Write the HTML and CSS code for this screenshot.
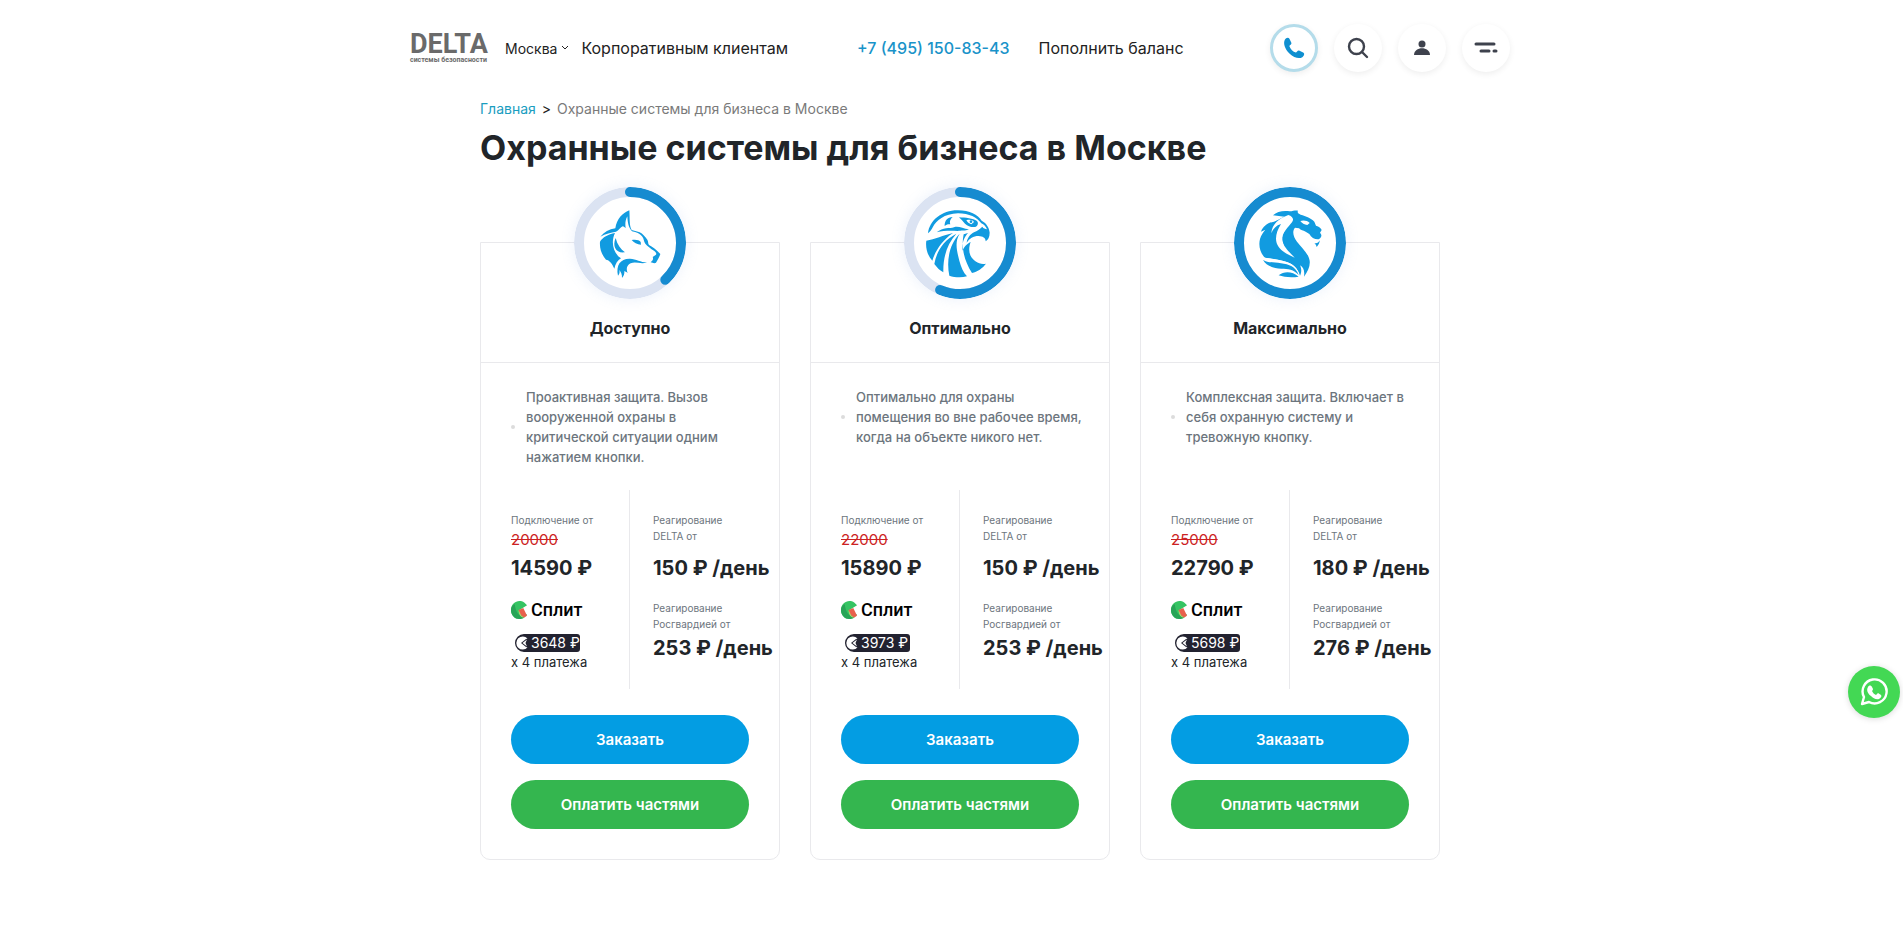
FILE: index.html
```html
<!DOCTYPE html>
<html lang="ru">
<head>
    <meta charset="UTF-8">
    <meta name="viewport" content="width=device-width, initial-scale=1.0">
    <title>Охранные системы для бизнеса в Москве</title>
    <link rel="stylesheet" href="styles.css">
</head>
<body>
    <!-- Shared icons -->
    <svg class="sprite" aria-hidden="true">
        <symbol id="split" viewBox="0 0 18 20">
            <path d="M14 2C8-2 0 2 0 10s8 12 14 8l3-3-8-5 8-5z" fill="#35c463"/>
            <path d="M0 10c0 8 8 12 14 8-5-1-9-5-10-14C1 5 0 8 0 10z" fill="#28a457"/>
            <path d="M8 10l5-2 4 8-3 2c-3-1-5-4-6-8z" fill="#e8604c"/>
            <path d="M8 10l3 6 3 2c-4 0-6-4-6-8z" fill="#b5d46a"/>
        </symbol>
        <symbol id="pac" viewBox="0 0 16 16">
            <path d="M12.500 3.500A6.500 6.500 0 1 0 12.500 12.500L11 12 6 8l5-4z" fill="#fff"/>
            <path d="M12 4.500L7.500 8l4.500 3.500-1.500-3.500z" fill="#fff"/>
        </symbol>
        <symbol id="handset" viewBox="0 0 24 24">
            <path d="M2 3c1-2 4-3 5-1l2 4c1 2-2 3-2 4 1 3 4 6 7 7 1 0 2-3 4-2l4 2c2 1 1 4-1 5-3 2-9 1-14-4S0 7 2 3z" fill="currentColor"/>
        </symbol>
    </svg>

    <header class="header">
        <a class="logo" href="#">
            <span class="logo-name">DELTA</span>
            <span class="logo-sub">системы безопасности</span>
        </a>
        <button class="city" type="button">Москва
            <svg width="8" height="6" viewBox="0 0 8 6"><path d="M1 1l3 3 3-3" fill="none" stroke="currentColor"/></svg>
        </button>
        <a class="nav-link" href="#">Корпоративным клиентам</a>
        <a class="phone" href="tel:+74951508343">+7 (495) 150-83-43</a>
        <a class="nav-link" href="#">Пополнить баланс</a>
        <div class="tools">
            <button class="tool tool-call" type="button" aria-label="Позвонить">
                <svg width="22" height="22"><use href="#handset"/></svg>
            </button>
            <button class="tool" type="button" aria-label="Поиск">
                <svg width="22" height="22" viewBox="0 0 22 22" fill="none" stroke="currentColor" stroke-width="2.400" stroke-linecap="round"><circle cx="9.500" cy="9.500" r="7.500"/><path d="M15 15l5 5"/></svg>
            </button>
            <button class="tool" type="button" aria-label="Личный кабинет">
                <svg width="16" height="16" viewBox="0 0 16 16" fill="currentColor"><circle cx="8" cy="4" r="3.500"/><path d="M0 15c0-9 16-9 16 0z"/></svg>
            </button>
            <button class="tool" type="button" aria-label="Меню">
                <svg width="24" height="12" viewBox="0 0 24 12" fill="none" stroke="currentColor" stroke-width="3" stroke-linecap="round"><path d="M2 2h18M7 9h8M20 9h2"/></svg>
            </button>
        </div>
    </header>

    <main class="content">
        <nav class="breadcrumbs">
            <a href="#">Главная</a> <span class="sep">&gt;</span> <span>Охранные системы для бизнеса в Москве</span>
        </nav>
        <h1>Охранные системы для бизнеса в Москве</h1>

        <div class="cards">
            <section class="card">
                <svg class="ring" viewBox="43 20 336 336">
                    <circle class="ring-track" cx="211" cy="188" r="153"/>
                    <path class="ring-value" pathLength="100" stroke-dasharray="37.8 100" d="M211 35a153 153 0 1 1 0 306a153 153 0 1 1 0-306"/>
                    <g class="animal">
                        <path d="M209 90C188 98 171 116 167 144C148 147 134 155 122 169C138 160 154 156 169 154C177 151 183 140 189 138C193 138 195 141 198 144C196 130 197 119 203 108C204 128 207 142 217 153C230 156 241 160 247 168C253 175 252 184 257 190C262 197 273 204 284 212C289 216 291 219 289 223L279 230C282 236 279 241 273 246C280 249 287 249 289 247C294 238 300 229 302 221C291 209 280 200 268 194C264 188 267 184 263 178C257 170 249 160 240 156L216 149C208 135 211 112 209 90Z"/>
                        <path d="M166 158C145 162 129 171 121 184C119 207 128 226 139 238C149 239 158 250 164 265C167 250 174 240 184 234C160 219 153 184 166 158Z"/>
                        <path d="M168 173C157 198 169 220 196 216C183 207 173 193 168 173Z"/>
                        <path d="M216 179C226 177 239 178 243 185L244 193C233 192 222 187 216 179Z"/>
                        <path d="M175 286C168 254 183 234 211 235C230 236 242 246 262 246C244 253 228 242 213 249C201 255 199 266 204 278C200 275 197 274 194 272C195 281 192 287 187 293C188 282 183 274 179 269C181 277 179 281 175 286Z"/>
                    </g>
                </svg>
                <h2>Доступно</h2>
                <ul class="about">
                    <li>Проактивная защита. Вызов вооруженной охраны в критической ситуации одним нажатием кнопки.</li>
                </ul>
                <div class="stats">
                    <div class="stat-left">
                        <div class="label">Подключение от</div>
                        <del>20000</del>
                        <div class="price">14590 ₽</div>
                        <div class="split"><svg width="17" height="20"><use href="#split"/></svg>Сплит</div>
                        <div class="badge"><svg width="16" height="16"><use href="#pac"/></svg>3648 ₽</div>
                        <div class="payments">x 4 платежа</div>
                    </div>
                    <div class="stat-right">
                        <div class="label">Реагирование<br>DELTA от</div>
                        <div class="price price-gap">150 ₽ /день</div>
                        <div class="label">Реагирование<br>Росгвардией от</div>
                        <div class="price">253 ₽ /день</div>
                    </div>
                </div>
                <div class="actions">
                    <button class="btn" type="button">Заказать</button>
                    <button class="btn btn-green" type="button">Оплатить частями</button>
                </div>
            </section>

            <section class="card">
                <svg class="ring" viewBox="43 20 336 336">
                    <circle class="ring-track" cx="211" cy="188" r="153"/>
                    <path class="ring-value" pathLength="100" stroke-dasharray="56.3 100" d="M211 35a153 153 0 1 1 0 306a153 153 0 1 1 0-306"/>
                    <g class="animal">
                        <path d="M115 159C119 120 158 89 205 90C240 90 265 103 276 121C289 127 299 142 300 157C300 170 295 179 288 183C288 172 279 168 267 167C250 167 240 174 231 187C233 172 242 162 253 156C263 152 270 146 278 139C281 145 287 145 292 147C288 138 283 133 275 129C262 112 239 99 205 99C164 100 139 122 130 139C126 147 121 154 115 159Z"/>
                        <path d="M208 111C227 112 250 114 262 122C267 128 265 135 259 139C249 142 236 139 226 130C220 124 214 116 208 111Z"/>
                        <path class="cut" d="M230 120C240 117 249 119 253 125L245 132C238 130 233 126 230 120Z"/>
                        <circle cx="244" cy="124" r="4"/>
                        <path d="M165 138C164 120 174 111 189 110C181 117 179 126 182 132C176 131 170 132 165 138Z"/>
                        <path d="M141 156C160 141 180 145 193 141C206 136 219 145 238 147C227 153 214 150 204 152C181 151 161 151 141 156Z"/>
                        <path d="M110 181C136 177 160 165 190 158C158 179 137 211 128 241C113 225 107 203 110 181Z"/>
                        <path d="M200 160C173 190 160 229 161 276C151 271 142 262 134 251C141 213 160 181 200 160Z"/>
                        <path d="M210 160C194 184 202 214 209 241C214 260 221 276 232 288C214 293 194 291 179 286C170 244 178 191 210 160Z"/>
                        <path d="M222 162C215 195 220 236 247 278C263 275 279 263 289 250C272 255 251 244 242 225C237 213 238 198 243 185C231 190 222 202 219 211C217 190 220 176 235 158Z"/>
                    </g>
                </svg>
                <h2>Оптимально</h2>
                <ul class="about">
                    <li>Оптимально для охраны помещения во вне рабочее время, когда на объекте никого нет.</li>
                </ul>
                <div class="stats">
                    <div class="stat-left">
                        <div class="label">Подключение от</div>
                        <del>22000</del>
                        <div class="price">15890 ₽</div>
                        <div class="split"><svg width="17" height="20"><use href="#split"/></svg>Сплит</div>
                        <div class="badge"><svg width="16" height="16"><use href="#pac"/></svg>3973 ₽</div>
                        <div class="payments">x 4 платежа</div>
                    </div>
                    <div class="stat-right">
                        <div class="label">Реагирование<br>DELTA от</div>
                        <div class="price price-gap">150 ₽ /день</div>
                        <div class="label">Реагирование<br>Росгвардией от</div>
                        <div class="price">253 ₽ /день</div>
                    </div>
                </div>
                <div class="actions">
                    <button class="btn" type="button">Заказать</button>
                    <button class="btn btn-green" type="button">Оплатить частями</button>
                </div>
            </section>

            <section class="card">
                <svg class="ring" viewBox="43 20 336 336">
                    <circle class="ring-value" cx="211" cy="188" r="153"/>
                    <g class="animal">
                        <path d="M160 105C171 93 193 90 210 93C220 92 228 89 235 91C232 96 236 101 243 103C258 107 276 114 284 124L289 136C298 139 304 143 306 149L301 157C308 164 306 172 297 177C285 178 275 172 269 161L258 154C250 150 244 150 238 144L226 142C216 154 222 171 232 184C244 201 266 217 270 241C272 258 265 273 253 289C256 270 250 260 241 255C247 267 245 278 241 286C235 264 221 252 201 245C176 238 157 235 136 233C121 217 116 196 121 176C124 164 132 154 137 148L124 154C130 137 146 127 163 124C174 119 184 113 195 109Z"/>
                        <path class="cut" d="M206 104C177 115 157 131 155 159C160 145 170 135 184 131C170 153 164 177 174 195C183 212 202 222 225 232C210 216 194 203 190 186C185 159 204 142 217 126C224 117 219 108 206 104Z"/>
                        <path d="M199 149C181 169 188 190 202 203C193 186 192 168 199 149Z"/>
                        <path class="cut" d="M242 122C251 119 262 120 270 128L263 134C254 133 247 129 242 122Z"/>
                        <path d="M284 188C291 190 297 187 300 180C300 187 297 194 291 200C290 195 287 191 284 188Z"/>
                        <path class="cut" d="M126 229C150 236 180 236 204 246C222 253 233 264 239 284C228 264 207 254 184 249C160 247 140 246 126 229Z"/>
                        <path d="M130 238C144 248 163 245 184 249C208 252 228 259 237 284C223 267 204 265 185 265C160 264 139 256 130 238Z"/>
                        <path d="M177 285C193 272 217 272 237 289C217 292 194 291 177 285Z"/>
                    </g>
                </svg>
                <h2>Максимально</h2>
                <ul class="about">
                    <li>Комплексная защита. Включает в себя охранную систему и тревожную кнопку.</li>
                </ul>
                <div class="stats">
                    <div class="stat-left">
                        <div class="label">Подключение от</div>
                        <del>25000</del>
                        <div class="price">22790 ₽</div>
                        <div class="split"><svg width="17" height="20"><use href="#split"/></svg>Сплит</div>
                        <div class="badge"><svg width="16" height="16"><use href="#pac"/></svg>5698 ₽</div>
                        <div class="payments">x 4 платежа</div>
                    </div>
                    <div class="stat-right">
                        <div class="label">Реагирование<br>DELTA от</div>
                        <div class="price price-gap">180 ₽ /день</div>
                        <div class="label">Реагирование<br>Росгвардией от</div>
                        <div class="price">276 ₽ /день</div>
                    </div>
                </div>
                <div class="actions">
                    <button class="btn" type="button">Заказать</button>
                    <button class="btn btn-green" type="button">Оплатить частями</button>
                </div>
            </section>
        </div>
    </main>

    <a class="whatsapp" href="#" aria-label="WhatsApp">
        <svg width="28" height="28" viewBox="0 0 28 28">
            <path d="M2 26l2-7A12 12 0 1 1 9 24z" fill="none" stroke="#fff" stroke-width="2.400" stroke-linejoin="round"/>
            <path d="M8 9c1-2 3-2 4 0l1 2c0 1-1 2-1 2 1 2 2 3 4 4l2-2 3 2c1 1 0 3-2 4-3 1-6-1-8-3-3-2-5-6-3-9z" fill="#fff"/>
        </svg>
    </a>
</body>
</html>
```
FILE: styles.css
```css
* {
    box-sizing: border-box;
}

body {
    margin: 0;
    padding-left: 17px; /* keeps the page centred against the scrollbar */
    background-color: #fff;
    color: #212529;
    font-family: Inter, "Open Sans", sans-serif;
}

a {
    color: inherit;
    text-decoration: none;
}

button {
    font-family: inherit;
    border: none;
    cursor: pointer;
}

.sprite {
    display: none;
}

/* Header */
.header {
    display: flex;
    align-items: center;
    max-width: 1100px;
    margin: 0 auto;
    padding-top: 24px;
    color: #222;
}

.logo {
    display: flex;
    flex-direction: column;
    width: 95px;
    color: #6a6a6a;
    font-family: Roboto, sans-serif;
    font-weight: bold;
}

.logo-name {
    font-size: 27px;
    line-height: 24px;
}

.logo-sub {
    font-size: 7px;
    line-height: 8px;
    white-space: nowrap;
}

.city {
    display: flex;
    align-items: center;
    gap: 4px;
    padding: 0;
    margin-right: 12px;
    background: none;
    color: inherit;
    font-size: 14px;
}

.nav-link {
    font-size: 16px;
    white-space: nowrap;
}

.phone {
    margin: 0 29px 0 69px;
    color: #1993c9;
    font-size: 16px;
    font-weight: 500;
    white-space: nowrap;
}

.tools {
    display: flex;
    gap: 16px;
    margin-left: auto;
}

.tool {
    display: flex;
    justify-content: center;
    align-items: center;
    width: 48px;
    height: 48px;
    padding: 0;
    border-radius: 50%;
    background-color: #fff;
    color: #3e424d;
    box-shadow: 0 2px 6px rgba(0, 0, 0, 0.07);
}

.tool-call {
    border: 3px solid #b4dcea;
    color: #0f8fd0;
}

/* Page */
.content {
    max-width: 960px;
    margin: 0 auto;
    padding: 27px 0 60px;
}

.breadcrumbs {
    color: #7a7a7a;
    font-size: 14px;
    line-height: 20px;
}

.breadcrumbs a {
    color: #1a9dbf;
}

.breadcrumbs .sep {
    margin: 0 2px;
    color: #222;
}

h1 {
    margin: 7px 0 72px;
    font-size: 34px;
    line-height: 44px;
    font-weight: 700;
}

/* Cards */
.cards {
    display: grid;
    grid-template-columns: repeat(3, 1fr);
    gap: 30px;
}

.card {
    position: relative;
    border: 1px solid #e9e9ec;
    border-radius: 0 0 10px 10px;
}

.ring {
    position: absolute;
    top: -56px;
    left: 50%;
    width: 112px;
    height: 112px;
    margin-left: -56px;
    border-radius: 50%;
    background-color: #fff;
    box-shadow: 0 0 14px rgba(120, 160, 230, 0.15);
}

.ring-track,
.ring-value {
    fill: none;
    stroke: #dbe3f2;
    stroke-width: 30;
}

.ring-value {
    stroke: #168bd0;
    stroke-linecap: round;
}

.animal {
    fill: #119be0;
}

.cut {
    fill: #fff;
}

h2 {
    margin: 0;
    padding: 73px 0 22px;
    border-bottom: 1px solid #e9e9ec;
    font-size: 16px;
    line-height: 24px;
    font-weight: 700;
    text-align: center;
}

.about {
    min-height: 127px;
    margin: 0;
    padding: 24px 24px 23px 30px;
    list-style: none;
    color: #6c757d;
    font-size: 13px;
    line-height: 20px;
    font-weight: 500;
}

.about li {
    display: flex;
    align-items: center;
    gap: 11px;
}

.about li::before {
    content: "";
    flex: none;
    width: 4px;
    height: 4px;
    border-radius: 50%;
    background-color: #dcdcdc;
}

.stats {
    display: grid;
    grid-template-columns: 1fr 1fr;
    white-space: nowrap;
}

.stat-left {
    padding: 22px 0 17px 30px;
    border-right: 1px solid #e9e9ec;
}

.stat-right {
    padding: 22px 0 17px 23px;
}

.label {
    color: #6c757d;
    font-size: 10px;
    line-height: 16px;
}

del {
    display: block;
    color: #c22;
    font-size: 15px;
    line-height: 24px;
}

.price {
    font-size: 20px;
    line-height: 32px;
    font-weight: 700;
}

.price-gap {
    margin: 8px 0 16px;
}

.split {
    display: flex;
    align-items: center;
    gap: 3px;
    margin-top: 16px;
    color: #000;
    font-family: Roboto, sans-serif;
    font-size: 18px;
    line-height: 20px;
    font-weight: 500;
}

.badge {
    display: flex;
    align-items: center;
    width: 65px;
    height: 18px;
    margin: 14px 0 0 4px;
    border-radius: 9px 3px 3px 9px;
    background-color: #222230;
    color: #fff;
    font-size: 14px;
    line-height: 18px;
}

.payments {
    font-size: 13px;
    line-height: 20px;
}

.actions {
    display: flex;
    flex-direction: column;
    gap: 16px;
    padding: 26px 30px 30px;
}

.btn {
    height: 49px;
    border-radius: 25px;
    background-color: #039de3;
    color: #fff;
    font-size: 15px;
    font-weight: 600;
}

.btn-green {
    background-color: #34b64f;
}

.whatsapp {
    position: fixed;
    right: 3px;
    top: 666px;
    display: flex;
    justify-content: center;
    align-items: center;
    width: 52px;
    height: 52px;
    border-radius: 50%;
    background-color: #43d854;
    box-shadow: 0 1px 6px rgba(0, 0, 0, 0.15);
}
```
